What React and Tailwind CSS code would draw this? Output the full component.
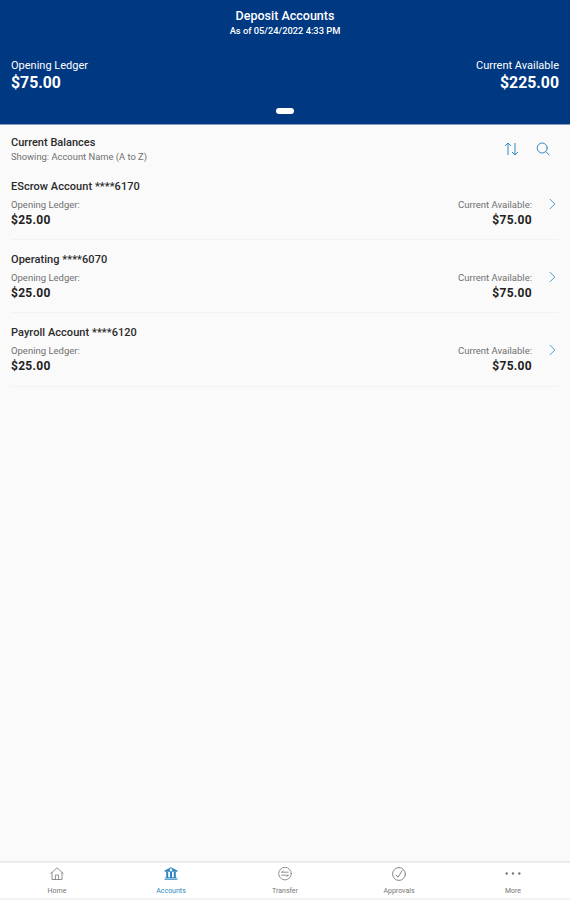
const accounts = [
  { name: 'EScrow Account ****6170', ledger: '$25.00', available: '$75.00' },
  { name: 'Operating ****6070', ledger: '$25.00', available: '$75.00' },
  { name: 'Payroll Account ****6120', ledger: '$25.00', available: '$75.00' },
];

const HomeIcon = () => (
  <svg width="14" height="14" viewBox="0 0 14 14" fill="none" stroke="currentColor" strokeWidth="0.8" strokeLinejoin="round" strokeLinecap="round">
    <path d="M0.8 6.4 7 0.8l6.2 5.6" />
    <path d="M2 5.5v7h10v-7" />
    <path d="M5.4 12.5V8h3.2v4.5" />
  </svg>
);

const BankIcon = () => (
  <svg width="14" height="14" viewBox="0 0 14 14" fill="currentColor">
    <path fillRule="evenodd" d="M7 0.3 13.4 3.4v1.4H0.6V3.4zM7 1.6a1.3 1.3 0 1 0 0 2.6 1.3 1.3 0 0 0 0-2.6z" />
    <path d="M2.2 4.8h2v5.6h-2zM6 4.8h2v5.6H6zM9.8 4.8h2v5.6h-2zM1.4 10.2h11.2v1H1.4zM0.5 11.8h13v1H0.5z" />
  </svg>
);

const TransferIcon = () => (
  <svg width="14" height="14" viewBox="0 0 14 14" fill="none" stroke="currentColor" strokeWidth="0.8" strokeLinecap="round" strokeLinejoin="round">
    <circle cx="7" cy="6.6" r="6.3" />
    <path d="M10.2 5.2H3.8M5.2 3.8 3.8 5.2M3.8 8.2h6.4M8.8 9.6l1.4-1.4" />
  </svg>
);

const ApprovalsIcon = () => (
  <svg width="14" height="14" viewBox="0 0 14 14" fill="none" stroke="currentColor" strokeWidth="0.9" strokeLinecap="round" strokeLinejoin="round">
    <circle cx="7" cy="7" r="6.4" />
    <path d="M4.2 8.2l1.8 2 4.2-6.6" />
  </svg>
);

const MoreIcon = () => (
  <svg width="16" height="14" viewBox="0 0 16 14" fill="currentColor">
    <circle cx="1.7" cy="6.5" r="1.2" />
    <circle cx="8" cy="6.5" r="1.2" />
    <circle cx="14.3" cy="6.5" r="1.2" />
  </svg>
);

const tabs = [
  { name: 'Home', icon: <HomeIcon /> },
  { name: 'Accounts', icon: <BankIcon />, active: true },
  { name: 'Transfer', icon: <TransferIcon /> },
  { name: 'Approvals', icon: <ApprovalsIcon /> },
  { name: 'More', icon: <MoreIcon /> },
];

const Header = () => (
  <header className="flex h-[125px] shrink-0 flex-col border-b border-[#8a9dc0] bg-[#003882] px-[11px] text-white">
    <div className="pt-2 text-center">
      <h1 className="text-[12.5px] leading-[15px] font-medium">Deposit Accounts</h1>
      <p className="text-[9.3px] leading-[15px] font-medium">As of 05/24/2022 4:33 PM</p>
    </div>
    <div className="mt-[20px] flex justify-between">
      <div>
        <p className="text-[11px] leading-4">Opening Ledger</p>
        <p className="text-[15.8px] leading-[18px] font-bold">$75.00</p>
      </div>
      <div className="text-right">
        <p className="text-[11px] leading-4">Current Available</p>
        <p className="text-[15.8px] leading-[18px] font-bold">$225.00</p>
      </div>
    </div>
    <div className="mx-auto mt-[16px] h-[6px] w-[18px] rounded-full bg-white" />
  </header>
);

const AccountRow = ({ account }) => (
  <li className="flex h-[73.2px] flex-col border-b border-[#f2f2f2] pt-[13px]">
    <h3 className="text-[11px] leading-[14px] font-medium tracking-[0.05px] text-[#2b2b2b]">{account.name}</h3>
    <div className="mt-[5px] flex">
      <div className="flex-1">
        <p className="text-[9.5px] leading-[12px] text-[#707070]">Opening Ledger:</p>
        <p className="text-[12px] leading-[18px] font-bold tracking-[0.3px] text-[#222]">{account.ledger}</p>
      </div>
      <div className="text-right">
        <p className="text-[9.5px] leading-[12px] text-[#707070]">Current Available:</p>
        <p className="text-[12px] leading-[18px] font-bold tracking-[0.3px] text-[#222]">{account.available}</p>
      </div>
      <svg className="-mt-px ml-[17px] mr-[3px] text-[#4d9fce]" width="7" height="12" viewBox="0 0 7 12" fill="none" stroke="currentColor" strokeWidth="1">
        <path d="M0.8 1 5.8 6l-5 5" />
      </svg>
    </div>
  </li>
);

const TabBar = () => (
  <nav className="grid h-[39px] shrink-0 grid-cols-5 border-t-2 border-b-2 border-t-[#ebebeb] border-b-[#f4f4f4] bg-white">
    {tabs.map((tab) => (
      <div
        key={tab.name}
        className={tab.active ? 'flex flex-col items-center pt-[4px] text-[#2e86c1]' : 'flex flex-col items-center pt-[4px] text-[#777]'}
      >
        {tab.icon}
        <span className="mt-[4px] text-[7px] leading-[12px]">{tab.name}</span>
      </div>
    ))}
  </nav>
);

export default function App() {
  return (
    <div className="flex h-[900px] w-full flex-col bg-[#fafafa] font-['Roboto',sans-serif]">
      <Header />
      <main className="flex-1 px-[11px]">
        <div className="flex h-[42px] items-start justify-between pt-[11px]">
          <div>
            <h2 className="text-[11px] leading-[14px] font-medium text-[#2b2b2b]">Current Balances</h2>
            <p className="text-[9.4px] leading-[14px] text-[#707070]">Showing: Account Name (A to Z)</p>
          </div>
          <div className="mr-[9px] mt-[6px] flex gap-[17px] text-[#3189c4]">
            <svg width="15" height="14" viewBox="0 0 15 14" fill="none" stroke="currentColor" strokeWidth="1">
              <path d="M4 13V1M1 4l3-3 3 3M11 1v12M8 10l3 3 3-3" />
            </svg>
            <svg width="14" height="14" viewBox="0 0 14 14" fill="none" stroke="currentColor" strokeWidth="1" strokeLinecap="round">
              <circle cx="6.2" cy="6" r="5" />
              <path d="m9.8 9.6 3.4 3.4" />
            </svg>
          </div>
        </div>
        <ul>
          {accounts.map((account) => (
            <AccountRow key={account.name} account={account} />
          ))}
        </ul>
      </main>
      <TabBar />
    </div>
  );
}
